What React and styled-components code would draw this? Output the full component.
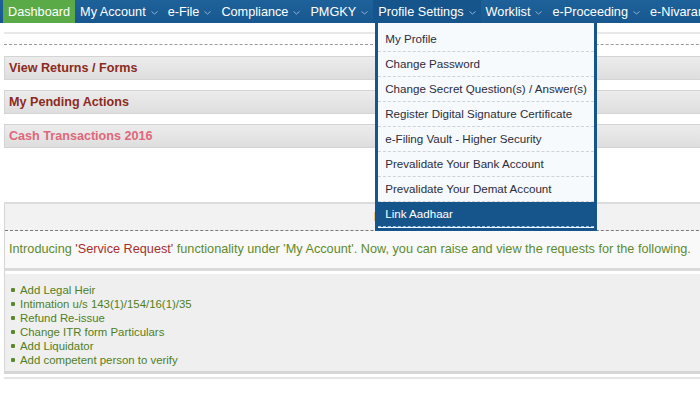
import React from "react";
import styled, { createGlobalStyle } from "styled-components";

const menu = [
  { label: "Dashboard", active: true },
  { label: "My Account", caret: true },
  { label: "e-File", caret: true },
  { label: "Compliance", caret: true },
  { label: "PMGKY", caret: true },
  { label: "Profile Settings", caret: true, open: true },
  { label: "Worklist", caret: true },
  { label: "e-Proceeding", caret: true },
  { label: "e-Nivaran", caret: true },
];

const profileItems = [
  "My Profile",
  "Change Password",
  "Change Secret Question(s) / Answer(s)",
  "Register Digital Signature Certificate",
  "e-Filing Vault - Higher Security",
  "Prevalidate Your Bank Account",
  "Prevalidate Your Demat Account",
  "Link Aadhaar",
];

const requests = [
  "Add Legal Heir",
  "Intimation u/s 143(1)/154/16(1)/35",
  "Refund Re-issue",
  "Change ITR form Particulars",
  "Add Liquidator",
  "Add competent person to verify",
];

const Caret = () => (
  <CaretIcon width="7" height="4" viewBox="0 0 7 4">
    <path d="M0.5 0.5 L3.5 3 L6.5 0.5" fill="none" stroke="currentColor" strokeWidth="1" />
  </CaretIcon>
);

const App = () => {
  return (
    <>
      <GlobalStyle />
      <Nav>
        {menu.map((item) => (
          <NavItem key={item.label} $active={item.active} $open={item.open}>
            {item.label}
            {item.caret && <Caret />}
            {item.open && (
              <Dropdown>
                {profileItems.map((p, i) => (
                  <DropItem key={p} $selected={i === profileItems.length - 1}>
                    {p}
                  </DropItem>
                ))}
              </Dropdown>
            )}
          </NavItem>
        ))}
      </Nav>
      <Content>
        <TopRule />
        <DottedRule />
        <Panel>
          <PanelTitle>View Returns / Forms</PanelTitle>
        </Panel>
        <Panel>
          <PanelTitle>My Pending Actions</PanelTitle>
        </Panel>
        <Panel>
          <PanelTitle $pink>Cash Transactions 2016</PanelTitle>
        </Panel>
        <NoticeBox>
          <NoticeHeader>Important</NoticeHeader>
          <Intro>
            Introducing <Quote>'Service Request'</Quote> functionality under 'My
            Account'. Now, you can raise and view the requests for the following.
          </Intro>
          <RequestList>
            {requests.map((r) => (
              <RequestItem key={r}>{r}</RequestItem>
            ))}
          </RequestList>
        </NoticeBox>
        <BottomRule />
      </Content>
    </>
  );
};

const GlobalStyle = createGlobalStyle`
  body {
    margin: 0;
    background: #ffffff;
    font-family: "Liberation Sans", Arial, sans-serif;
    overflow: hidden;
  }
`;

const Nav = styled.div`
  display: flex;
  height: 23px;
  padding-left: 3px;
  background: linear-gradient(#1e629b, #18578f);
  white-space: nowrap;
  position: relative;
  z-index: 5;
`;

const NavItem = styled.div`
  position: relative;
  display: flex;
  align-items: center;
  padding: 0 5px;
  font-size: 12.7px;
  color: #ffffff;
  background: ${(p) => (p.$active ? "#5aab48" : p.$open ? "#15558c" : "transparent")};
`;

const CaretIcon = styled.svg`
  margin-left: 5px;
  margin-top: 3px;
  color: #8fb2d6;
`;

const Dropdown = styled.div`
  position: absolute;
  top: 23px;
  left: 2px;
  width: 216px;
  border: 3px solid #15558c;
  border-top: none;
  background: #f6fafd;
  padding-top: 4px;
`;

const DropItem = styled.div`
  height: 24px;
  line-height: 24px;
  padding-left: 7px;
  font-size: 11.6px;
  color: ${(p) => (p.$selected ? "#ffffff" : "#2c2c3c")};
  background: ${(p) => (p.$selected ? "#15558c" : "transparent")};
  border-bottom: 1px dashed ${(p) => (p.$selected ? "#9fc3e3" : "#cfd3d6")};
  margin-bottom: ${(p) => (p.$selected ? "1px" : "0")};
`;

const Content = styled.div`
  padding-left: 4px;
  width: 740px;
`;

const TopRule = styled.div`
  margin-top: 9px;
  height: 2px;
  background: #e8e8e8;
`;

const DottedRule = styled.div`
  margin-top: 10px;
  border-top: 1px dashed #9a9a9a;
  margin-bottom: 11px;
`;

const Panel = styled.div`
  height: 22px;
  display: flex;
  align-items: center;
  margin-bottom: 10px;
  border: 1px solid #d4d4d4;
  background: linear-gradient(#ececec, #dedede);
  padding-left: 4px;
`;

const PanelTitle = styled.span`
  font-size: 12.6px;
  font-weight: bold;
  color: ${(p) => (p.$pink ? "#e0677b" : "#8c2a1e")};
`;

const NoticeBox = styled.div`
  margin-top: 54px;
  border-top: 2px solid #dcdcdc;
  border-left: 1px solid #d6d6d6;
`;

const NoticeHeader = styled.div`
  height: 26px;
  line-height: 26px;
  background: #f2f2f2;
  border-bottom: 1px dashed #7a7a7a;
  padding-left: 369px;
  font-size: 12.6px;
  font-weight: bold;
  color: #b02a2a;
`;

const Intro = styled.div`
  height: 37px;
  line-height: 37px;
  padding-left: 4px;
  background: #f9f9f9;
  border-bottom: 3px solid #dadada;
  font-size: 12.7px;
  color: #5d8a2c;
  white-space: nowrap;
`;

const Quote = styled.span`
  color: #a4302b;
`;

const RequestList = styled.ul`
  list-style: none;
  margin: 2px 0 0;
  padding: 9px 0 4px 6px;
  background: #efefef;
  border-top: 1px solid #ffffff;
  border-bottom: 3px solid #d6d6d6;
`;

const RequestItem = styled.li`
  position: relative;
  padding-left: 9px;
  font-size: 11.4px;
  line-height: 14px;
  color: #4f7f1e;

  &::before {
    content: "";
    position: absolute;
    left: 0;
    top: 5px;
    width: 4px;
    height: 4px;
    border-radius: 1px;
    background: #5b8a2c;
  }
`;

const BottomRule = styled.div`
  margin-top: 3px;
  height: 2px;
  background: #e4e4e4;
`;

export default App;
